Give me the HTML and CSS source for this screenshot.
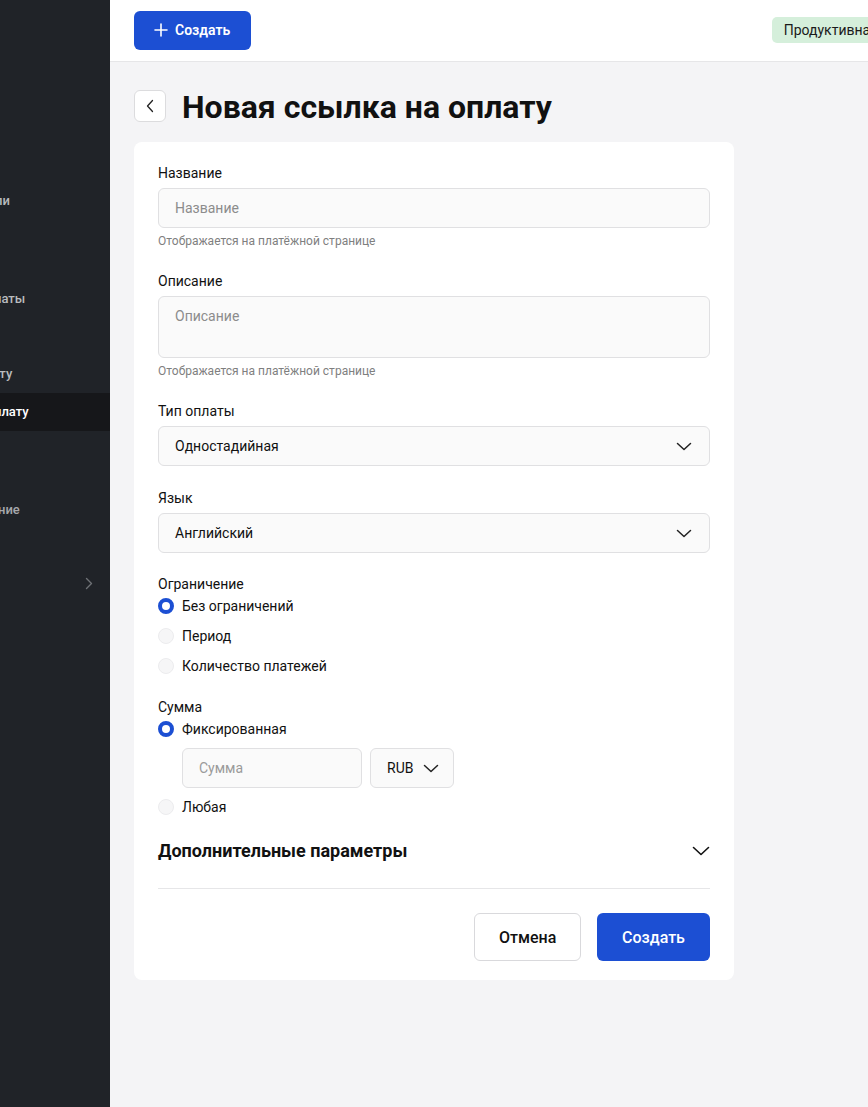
FILE: index.html
```html
<!DOCTYPE html>
<html lang="ru">
<head>
<meta charset="utf-8">
<title>Новая ссылка на оплату</title>
<link rel="stylesheet" href="styles.css">
</head>
<body>
<div class="app">
  <aside class="sidebar">
    <nav class="nav">
      <div class="nav-item i1">ли</div>
      <div class="nav-item i2">латы</div>
      <div class="nav-item i3">лату</div>
      <div class="nav-item i4 active">плату</div>
      <div class="nav-item i5">ние</div>
      <div class="nav-item i6"><span class="nav-chev"><svg width="8" height="13" viewBox="0 0 8 13"><path d="M1.5 1.5l5 5-5 5" fill="none" stroke="currentColor" stroke-width="1.4" stroke-linecap="round" stroke-linejoin="round"/></svg></span></div>
    </nav>
  </aside>
  <div class="main">
    <header class="topbar">
      <button class="btn-create-top"><svg width="14" height="14" viewBox="0 0 14 14"><path d="M7 1v12M1 7h12" stroke="#fff" stroke-width="1.6" stroke-linecap="round"/></svg><span>Создать</span></button>
      <span class="badge">Продуктивная среда</span>
    </header>
    <main class="content">
      <div class="page-head">
        <button class="back"><svg width="8" height="14" viewBox="0 0 8 14"><path d="M6.5 1.5L1.5 7l5 5.5" fill="none" stroke="#222" stroke-width="1.3" stroke-linecap="round" stroke-linejoin="round"/></svg></button>
        <h1 class="title">Новая ссылка на оплату</h1>
      </div>
      <section class="card">
        <div class="field">
          <label class="label">Название</label>
          <div class="input">Название</div>
          <div class="hint">Отображается на платёжной странице</div>
        </div>
        <div class="field">
          <label class="label">Описание</label>
          <div class="input textarea">Описание</div>
          <div class="hint">Отображается на платёжной странице</div>
        </div>
        <div class="field">
          <label class="label">Тип оплаты</label>
          <div class="input select"><span class="val">Одностадийная</span><svg class="chev" width="16" height="9" viewBox="0 0 16 9"><path d="M1.5 1.5l6.5 6 6.5-6" fill="none" stroke="#222" stroke-width="1.5" stroke-linecap="round" stroke-linejoin="round"/></svg></div>
        </div>
        <div class="field field-tight">
          <label class="label">Язык</label>
          <div class="input select"><span class="val">Английский</span><svg class="chev" width="16" height="9" viewBox="0 0 16 9"><path d="M1.5 1.5l6.5 6 6.5-6" fill="none" stroke="#222" stroke-width="1.5" stroke-linecap="round" stroke-linejoin="round"/></svg></div>
        </div>
        <div class="field field-radios">
          <label class="label">Ограничение</label>
          <div class="radios">
            <div class="radio"><span class="dot on"></span>Без ограничений</div>
            <div class="radio"><span class="dot"></span>Период</div>
            <div class="radio"><span class="dot"></span>Количество платежей</div>
          </div>
        </div>
        <div class="field">
          <label class="label">Сумма</label>
          <div class="radios tight">
            <div class="radio"><span class="dot on"></span>Фиксированная</div>
            <div class="amount-row">
              <div class="input amount">Сумма</div>
              <div class="input currency"><span class="val">RUB</span><svg width="16" height="9" viewBox="0 0 16 9"><path d="M1.5 1.5l6.5 6 6.5-6" fill="none" stroke="#222" stroke-width="1.5" stroke-linecap="round" stroke-linejoin="round"/></svg></div>
            </div>
            <div class="radio"><span class="dot"></span>Любая</div>
          </div>
        </div>
        <div class="extra">
          <span class="extra-title">Дополнительные параметры</span>
          <svg width="18" height="10" viewBox="0 0 18 10"><path d="M1.5 1.5l7.5 7 7.5-7" fill="none" stroke="#111" stroke-width="1.6" stroke-linecap="round" stroke-linejoin="round"/></svg>
        </div>
        <div class="actions">
          <button class="btn btn-cancel">Отмена</button>
          <button class="btn btn-primary">Создать</button>
        </div>
      </section>
    </main>
  </div>
</div>
</body>
</html>
```
FILE: styles.css
```css
* { box-sizing: border-box; }
html, body { margin: 0; padding: 0; }
body {
  font-family: Roboto, "Noto Sans", "Liberation Sans", sans-serif;
  color: #111;
  background: #f4f4f6;
  width: 868px;
  height: 1107px;
  overflow: hidden;
}
.app { display: flex; height: 1107px; }

.sidebar {
  width: 110px;
  flex: 0 0 110px;
  background: #202328;
  overflow: hidden;
}
.nav { display: flex; flex-direction: column; padding-top: 182px; }
.nav-item {
  font-size: 13px;
  font-weight: 500;
  line-height: 38px;
  height: 38px;
  color: #b9bbbe;
  white-space: nowrap;
}
.i1 { text-indent: -5px; }
.i2 { margin-top: 60px; text-indent: -6px; }
.i3 { margin-top: 37px; text-indent: -15px; }
.i4 { margin-top: 0; text-indent: -6px; }
.i5 { margin-top: 60px; color: #a6a8ac; text-indent: -2px; }
.i6 { margin-top: 36px; }
.nav-item.active { background: #16171a; color: #fff; }
.nav-chev { display: flex; justify-content: flex-end; padding-right: 17px; color: #6e7176; padding-top: 12px; }
.nav-chev svg { display: block; }

.main { flex: 1; display: flex; flex-direction: column; min-width: 0; }
.topbar {
  height: 62px;
  background: #fff;
  border-bottom: 1px solid #e6e6e8;
  display: flex;
  align-items: center;
  justify-content: space-between;
  padding: 0 0 1px 24px;
  overflow: hidden;
}
.btn-create-top {
  display: flex;
  align-items: center;
  gap: 7px;
  height: 39px;
  padding: 0 21px 0 20px;
  background: #1c4fd3;
  border: none;
  border-radius: 6px;
  color: #fff;
  font-family: inherit;
  font-size: 14px;
  font-weight: 600;
}
.badge {
  background: #d5efdb;
  color: #1a1a1a;
  font-size: 14px;
  height: 26px;
  line-height: 26px;
  padding: 0 12px;
  border-radius: 5px;
  white-space: nowrap;
  margin-right: -64px;
}

.content { padding: 28px 24px; }
.page-head { display: flex; align-items: center; gap: 16px; height: 32px; }
.back {
  width: 32px;
  height: 32px;
  border: 1px solid #dcdcde;
  background: #fff;
  border-radius: 6px;
  display: flex;
  align-items: center;
  justify-content: center;
  padding: 0;
}
.title {
  margin: 0;
  font-size: 32px;
  font-weight: 700;
  line-height: 36px;
  letter-spacing: 0;
  position: relative;
  top: 1px;
}

.card {
  margin-top: 20px;
  width: 600px;
  background: #fff;
  border-radius: 8px;
  padding: 21px 24px 19px;
  display: flex;
  flex-direction: column;
}
.field { display: flex; flex-direction: column; margin-bottom: 22px; }
.field-tight { margin-bottom: 21px; }
.field-radios { margin-bottom: 19px; }
.label { font-size: 14px; line-height: 20px; color: #111; margin-bottom: 5px; }
.input {
  height: 40px;
  background: #fafafa;
  border: 1px solid #e0e0e2;
  border-radius: 6px;
  padding: 0 16px;
  display: flex;
  align-items: center;
  font-size: 14px;
  color: #8c8c8c;
}
.textarea { height: 62px; align-items: flex-start; padding-top: 11px; }
.select { justify-content: space-between; color: #111; padding-right: 17px; }
.hint { font-size: 12px; line-height: 16px; color: #7f7f7f; margin-top: 5px; }

.radios { display: flex; flex-direction: column; gap: 6px; margin-top: -5px; }
.radio { display: flex; align-items: center; gap: 8px; height: 24px; font-size: 14px; color: #111; }
.dot {
  width: 16px;
  height: 16px;
  border-radius: 50%;
  background: #f6f6f7;
  border: 1px solid #ececee;
  flex: 0 0 16px;
}
.dot.on { background: #fff; border: 4px solid #1c4fd3; }
.radios.tight { gap: 7px; margin-top: -5px; }
.amount-row { display: flex; gap: 8px; padding-left: 24px; }
.amount { width: 180px; color: #9a9a9a; }
.currency { width: 84px; color: #111; padding: 0 14px 0 16px; justify-content: space-between; }

.extra {
  display: flex;
  align-items: center;
  justify-content: space-between;
  height: 24px;
  margin-top: -2px;
}
.extra-title { font-size: 18px; font-weight: 700; line-height: 24px; }
.actions {
  border-top: 1px solid #e6e6e8;
  margin-top: 25px;
  padding-top: 24px;
  display: flex;
  justify-content: flex-end;
  gap: 16px;
}
.btn {
  height: 48px;
  border-radius: 6px;
  font-family: inherit;
  font-size: 16px;
  font-weight: 500;
  padding: 0 24px;
}
.btn-cancel { background: #fff; border: 1px solid #d9d9dc; color: #111; width: 107px; }
.btn-primary { background: #1c4fd3; border: none; color: #fff; width: 113px; }
```
